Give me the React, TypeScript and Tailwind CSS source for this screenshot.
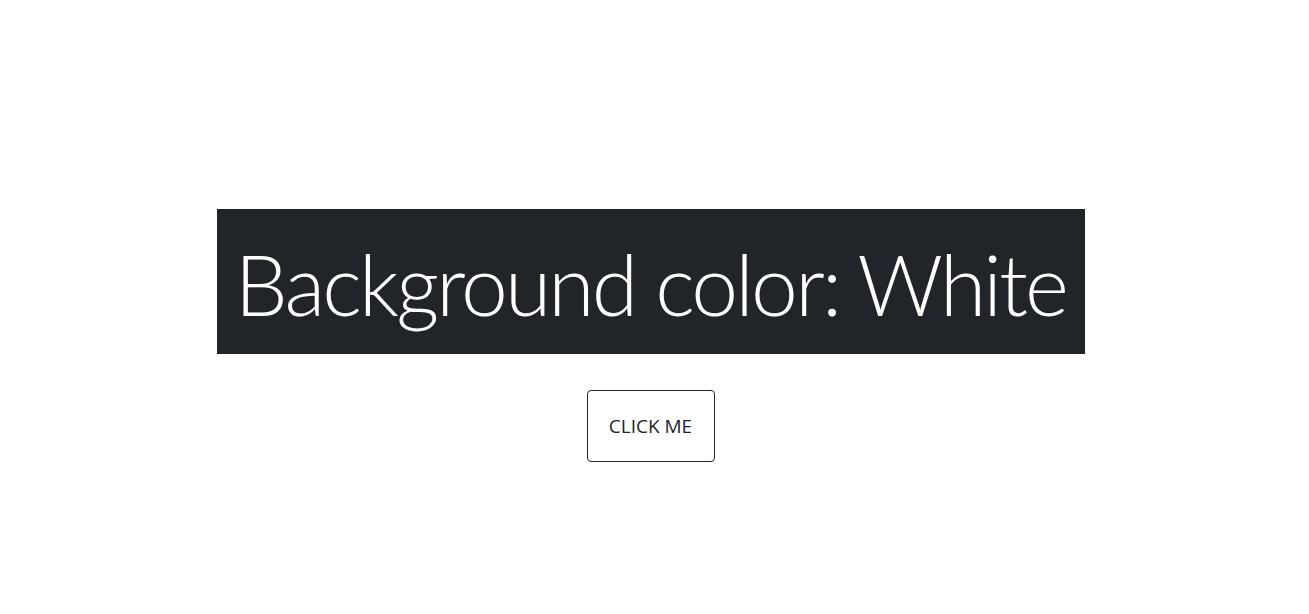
import React from 'react'

export default function App() {
  return (
    <div className="min-h-screen bg-white flex flex-col items-center pt-[209px] pr-[8px]" style={{ fontFamily: '"Open Sans", "Noto Sans", sans-serif' }}>
      <div className="bg-[#212529] text-white h-[145px] w-[868px] flex items-center justify-center">
        <h1 className="text-[84px] font-light leading-none tracking-[-2.8px] whitespace-nowrap pt-[4px]" style={{ fontFamily: 'Lato, "Open Sans", sans-serif' }}>
          Background color: White
        </h1>
      </div>
      <button className="mt-[36px] w-[128px] h-[72px] border border-[#212529] rounded-[4px] text-[19px] text-[#212529] bg-white">
        CLICK ME
      </button>
    </div>
  )
}
